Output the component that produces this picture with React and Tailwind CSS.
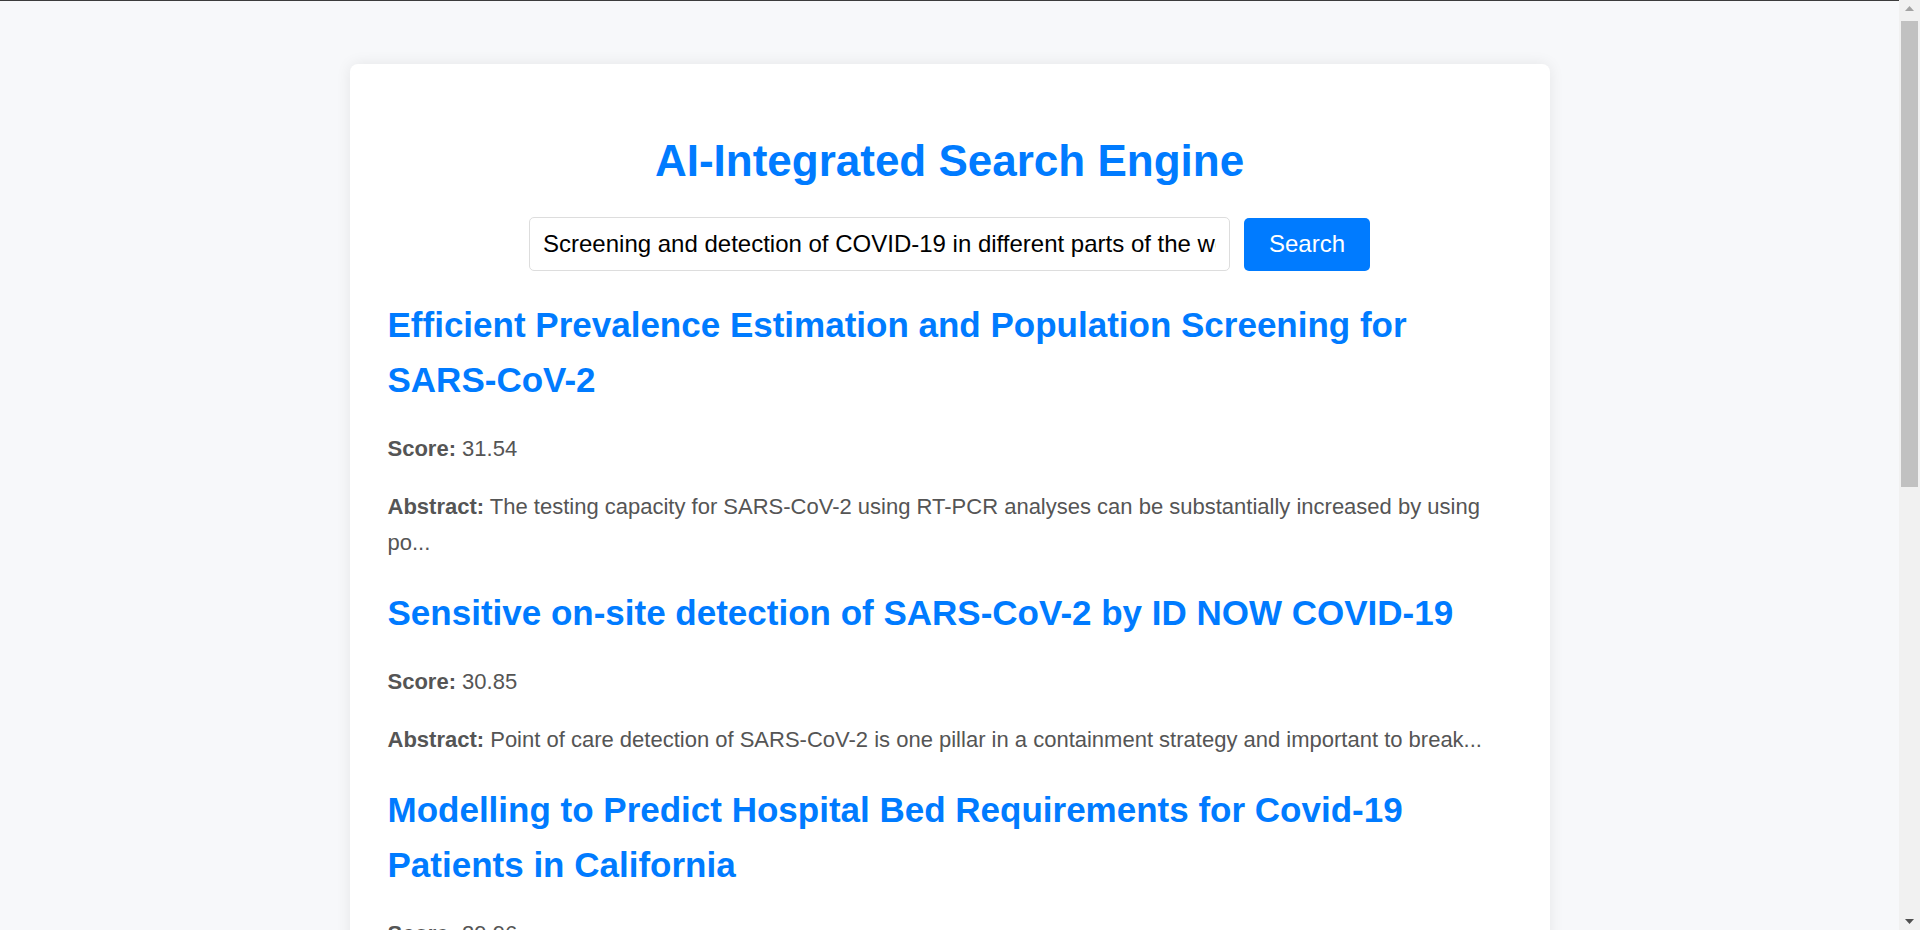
import { useState } from "react";

const results = [
  {
    title: "Efficient Prevalence Estimation and Population Screening for SARS-CoV-2",
    score: "31.54",
    abstract: "The testing capacity for SARS-CoV-2 using RT-PCR analyses can be substantially increased by using po...",
  },
  {
    title: "Sensitive on-site detection of SARS-CoV-2 by ID NOW COVID-19",
    score: "30.85",
    abstract: "Point of care detection of SARS-CoV-2 is one pillar in a containment strategy and important to break...",
  },
  {
    title: "Modelling to Predict Hospital Bed Requirements for Covid-19 Patients in California",
    score: "29.96",
    abstract: "In the 2019 novel coronavirus (COVID-19) epidemic, hospitals in California are facing a surge of pat...",
  },
  {
    title: "Population-wide screening for SARS-CoV-2 in Slovakia",
    score: "29.41",
    abstract: "Slovakia conducted multiple rounds of population-wide rapid antigen testing for SARS-CoV-2 in late 2...",
  },
  {
    title: "Detection of SARS-CoV-2 in different types of clinical specimens",
    score: "28.77",
    abstract: "This study describes results of testing for SARS-CoV-2 in 1070 specimens collected from 205 patient...",
  },
  {
    title: "Pooled sample testing for COVID-19 screening in low prevalence settings",
    score: "28.12",
    abstract: "Group testing strategies can reduce the number of tests needed to screen large populations for SARS-...",
  },
  {
    title: "Global screening strategies for COVID-19 across different regions of the world",
    score: "27.58",
    abstract: "Countries around the world have adopted very different approaches to screening and detection of COV...",
  },
  {
    title: "Rapid antigen tests for the detection of SARS-CoV-2 infection",
    score: "27.03",
    abstract: "Accurate rapid diagnostic tests for SARS-CoV-2 infection could contribute to clinical and public hea...",
  },
  {
    title: "Saliva as a non-invasive specimen for detection of SARS-CoV-2",
    score: "26.49",
    abstract: "Saliva has been proposed as an alternative to nasopharyngeal swabs for the detection of SARS-CoV-2 i...",
  },
  {
    title: "Temperature screening at airports for detecting COVID-19 in travellers",
    score: "25.87",
    abstract: "Entry screening of travellers using body temperature measurement has been widely implemented during...",
  },
];

// window scrollbar as it appears in the screenshot
const Scrollbar = () => (
  <div className="fixed top-0 right-0 flex h-screen w-[21px] flex-col bg-[#f1f1f1]">
    <div className="flex h-[17px] items-center justify-center">
      <svg width="9" height="5" viewBox="0 0 9 5">
        <path d="M0 5 L4.5 0 L9 5 Z" fill="#a3a3a3" />
      </svg>
    </div>
    <div className="mx-[2px] mt-[4px] h-[466px] bg-[#c1c1c1]" />
    <div className="flex-1" />
    <div className="flex h-[17px] items-center justify-center">
      <svg width="9" height="5" viewBox="0 0 9 5">
        <path d="M0 0 L9 0 L4.5 5 Z" fill="#505050" />
      </svg>
    </div>
  </div>
);

const App = () => {
  const [query, setQuery] = useState(
    "Screening and detection of COVID-19 in different parts of the world"
  );

  return (
    <div className="min-h-screen border-t border-[#3c3c3c] bg-[#f7f8fa] pt-[63px] pr-[21px] pb-[64px] font-['Liberation_Sans',Arial,sans-serif]">
      <div className="mx-auto max-w-[1200px] rounded-[8px] bg-white px-[38px] pt-[72px] pb-[40px] shadow-[0_0_15px_rgba(0,0,0,0.08)]">
        <h1 className="mb-[31px] text-center text-[44px] leading-[50px] font-bold text-[#007bff]">
          AI-Integrated Search Engine
        </h1>

        {/* Search bar */}
        <div className="flex items-center justify-center gap-[14px]">
          <input
            type="text"
            value={query}
            onChange={(e) => setQuery(e.target.value)}
            className="h-[54px] w-[701px] rounded-[5px] border border-[#dddddd] px-[13px] text-[24px] text-black outline-none"
          />
          <button className="h-[53px] w-[126px] rounded-[5px] bg-[#007bff] text-[24px] text-white">
            Search
          </button>
        </div>

        {/* Results */}
        <div className="mt-[26px] flex flex-col gap-[24px] pr-[12px]">
          {results.map((r, idx) => (
            <div key={idx}>
              <h2 className="mb-[24px] text-[35px] leading-[55px] font-bold text-[#007bff]">
                {r.title}
              </h2>
              <p className="mb-[22px] text-[22px] leading-[36px] text-[#555555]">
                <strong>Score:</strong> {r.score}
              </p>
              <p className="text-[22px] leading-[36px] text-[#555555]">
                <strong>Abstract:</strong> {r.abstract}
              </p>
            </div>
          ))}
        </div>
      </div>
      <Scrollbar />
    </div>
  );
};

export default App;
